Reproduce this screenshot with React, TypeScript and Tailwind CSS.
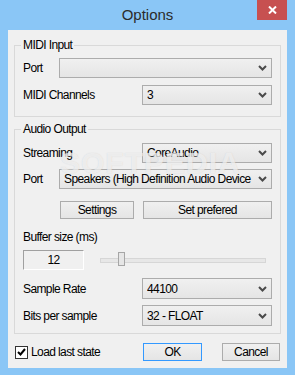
import React from "react";

function Chevron() {
  return (
    <svg width="9" height="6" viewBox="0 0 9 6" className="shrink-0">
      <path d="M1 1 L4.5 4.5 L8 1" fill="none" stroke="#4a4a4a" strokeWidth="2" />
    </svg>
  );
}

function Combo({ value, h = "h-[20px]" }: { value: string; h?: string }) {
  return (
    <div
      className={`flex min-w-0 flex-1 items-center ${h} border border-[#acacac] bg-linear-to-b from-[#f0f0f0] to-[#e5e5e5] pl-[4px] pr-[4px]`}
    >
      <span className="min-w-0 flex-1 overflow-hidden whitespace-nowrap">{value}</span>
      <Chevron />
    </div>
  );
}

function Group({ title, children, className = "" }: { title: string; children: React.ReactNode; className?: string }) {
  return (
    <div className={`relative ml-[6px] w-[267px] border border-[#d9d9d9] px-[8px] ${className}`}>
      <span className="absolute -top-[8px] left-[6px] bg-[#f0f0f0] px-[2px] leading-[14px]">{title}</span>
      {children}
    </div>
  );
}

function Button({ label, className = "", focused = false }: { label: string; className?: string; focused?: boolean }) {
  return (
    <div
      className={`flex h-[18px] items-center justify-center border ${
        focused ? "border-[#3399ff]" : "border-[#acacac]"
      } bg-linear-to-b from-[#f0f0f0] to-[#e5e5e5] ${className}`}
    >
      {label}
    </div>
  );
}

export default function App() {
  return (
    <div className="relative flex h-[375px] w-[295px] flex-col bg-[#8ac6f6] font-['Liberation_Sans',Arial,sans-serif] text-[12px] tracking-[-0.6px] text-black">
      {/* title bar */}
      <div className="relative flex h-[30px] shrink-0 items-center justify-center">
        <span className="text-[15px] tracking-normal text-[#2b2b2b]">Options</span>
        <div className="absolute right-[8px] top-0 flex h-[20px] w-[30px] items-center justify-center bg-[#c75050]">
          <svg width="9" height="8" viewBox="0 0 9 8">
            <path d="M1 0.5 L8 7.5 M8 0.5 L1 7.5" stroke="#ffffff" strokeWidth="2" />
          </svg>
        </div>
      </div>

      {/* client */}
      <div className="mx-[8px] flex flex-1 flex-col bg-[#f0f0f0]">
        <Group title="MIDI Input" className="mt-[15px] pt-[12px] pb-[11px]">
          <div className="flex h-[20px] items-center">
            <span className="w-[36px] shrink-0">Port</span>
            <Combo value="" />
          </div>
          <div className="mt-[7px] flex h-[20px] items-center">
            <span className="w-[119px] shrink-0">MIDI Channels</span>
            <Combo value="3" />
          </div>
        </Group>

        <Group title="Audio Output" className="mt-[12px] pt-[13px] pb-[7px]">
          <div className="flex h-[20px] items-center">
            <span className="w-[119px] shrink-0">Streaming</span>
            <Combo value="CoreAudio" />
          </div>
          <div className="mt-[6px] flex h-[20px] items-center">
            <span className="w-[36px] shrink-0">Port</span>
            <Combo value="Speakers (High Definition Audio Device" />
          </div>
          <div className="mt-[12px] flex items-center">
            <Button label="Settings" className="ml-[37px] w-[74px]" />
            <Button label="Set prefered" className="ml-[9px] flex-1" />
          </div>
          <div className="mt-[11px] h-[14px] leading-[14px]">Buffer size (ms)</div>
          <div className="mt-[6px] flex h-[20px] items-center">
            <div className="flex h-[20px] w-[61px] items-center justify-center border border-b-white border-l-[#a0a0a0] border-r-white border-t-[#a0a0a0]">
              12
            </div>
            <div className="relative ml-[16px] flex h-[20px] w-[166px] items-center">
              <div className="h-[5px] w-full border border-[#d6d6d6] bg-[#e7e7e7]" />
              <div className="absolute left-[18px] top-[2px] h-[14px] w-[7px] border border-[#a6a6a6] bg-[#e6e6e6]" />
            </div>
          </div>
          <div className="mt-[8px] flex h-[21px] items-center">
            <span className="w-[119px] shrink-0">Sample Rate</span>
            <Combo value="44100" h="h-[21px]" />
          </div>
          <div className="mt-[6px] flex h-[21px] items-center">
            <span className="w-[119px] shrink-0">Bits per sample</span>
            <Combo value="32 - FLOAT" h="h-[21px]" />
          </div>
        </Group>

        <div className="mt-[9px] flex items-center pl-[7px]">
          <div className="flex w-[128px] items-center">
            <div className="flex h-[13px] w-[13px] items-center justify-center border border-[#333333] bg-white">
              <svg width="9" height="8" viewBox="0 0 9 8">
                <path d="M1 4 L3.5 6.5 L8 1" fill="none" stroke="#000" strokeWidth="2" />
              </svg>
            </div>
            <span className="ml-[3px]">Load last state</span>
          </div>
          <Button label="OK" focused className="w-[59px]" />
          <Button label="Cancel" className="ml-[20px] w-[58px]" />
        </div>
      </div>
      <div className="h-[7px] shrink-0" />

      {/* watermark */}
      <div className="pointer-events-none absolute left-[60px] top-[140px] text-[30px] font-bold tracking-[1px] text-white/60 [text-shadow:0_0_1px_rgba(180,180,180,0.5)]">
        SOFTPEDIA
      </div>
    </div>
  );
}
